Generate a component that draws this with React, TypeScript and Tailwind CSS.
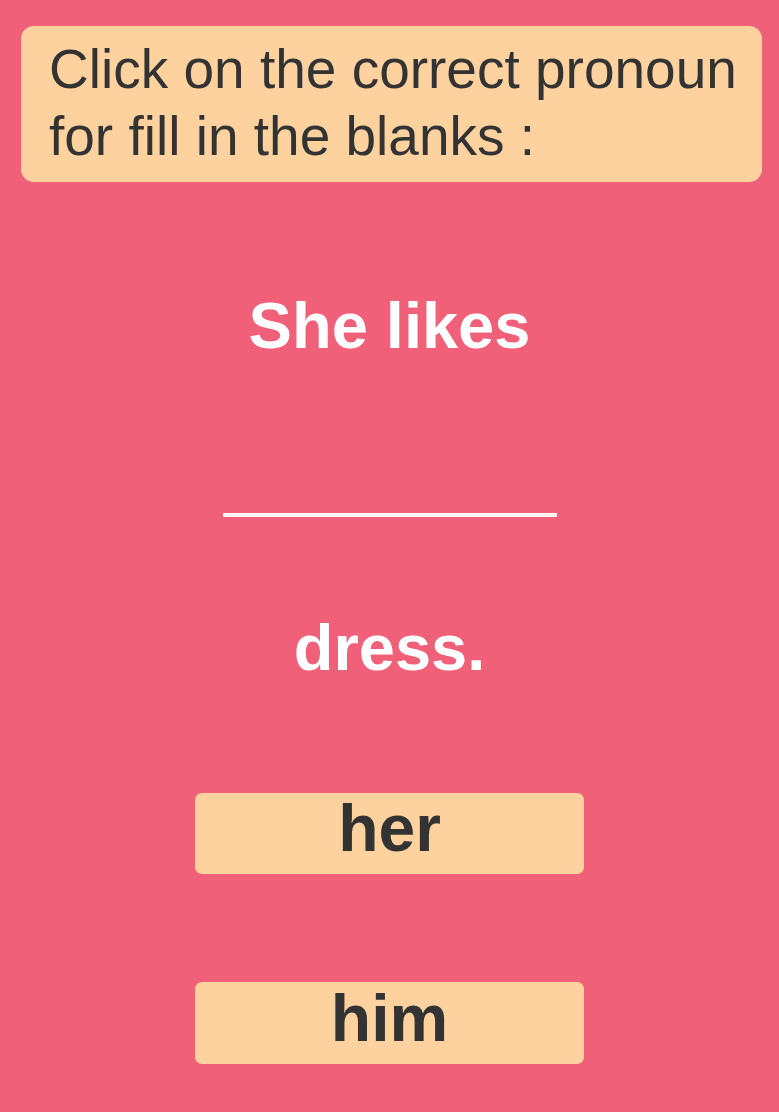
export default function App() {
  return (
    <div
      className="min-h-screen w-full bg-[#f06078] flex flex-col items-center"
      style={{ fontFamily: '"Liberation Sans", Arial, sans-serif' }}
    >
      <div className="mt-[26px] ml-[21px] self-start w-[741px] rounded-[13px] bg-[#fdd29f] pl-[28px] pr-[8px] pt-[10px] pb-[12px] text-[55px] leading-[67px] text-[#333333]">
        Click on the correct pronoun
        <br />
        for fill in the blanks :
      </div>

      <div className="mt-[104px] h-[80px] text-[65px] leading-[80px] font-bold text-white">
        She likes
      </div>

      <div className="mt-[147px] h-[4px] w-[334px] bg-[#fdf6f6]" />

      <div className="mt-[91px] h-[80px] text-[65px] leading-[80px] font-bold text-white">
        dress.
      </div>

      <button className="mt-[105px] flex h-[81px] w-[389px] items-start justify-center rounded-[7px] bg-[#fdd29f] pt-[2px] text-[66px] leading-[66px] font-bold text-[#333333]">
        her
      </button>

      <button className="mt-[108px] flex h-[82px] w-[389px] items-start justify-center rounded-[7px] bg-[#fdd29f] pt-[3px] text-[66px] leading-[66px] font-bold text-[#333333]">
        him
      </button>
    </div>
  );
}
